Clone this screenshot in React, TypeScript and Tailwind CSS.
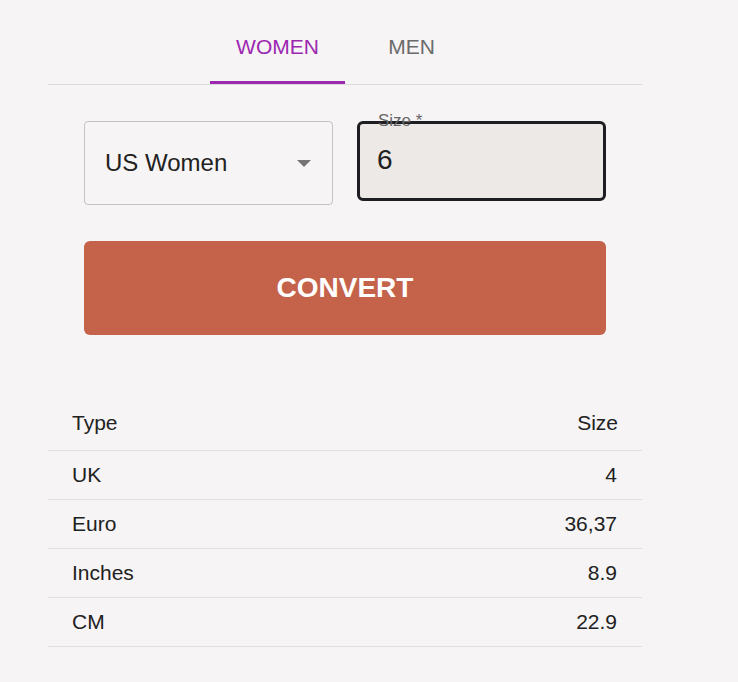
import { useState } from 'react'

const rows = [
  { type: 'UK', size: '4' },
  { type: 'Euro', size: '36,37' },
  { type: 'Inches', size: '8.9' },
  { type: 'CM', size: '22.9' },
]

export default function App() {
  const [tab, setTab] = useState('women')
  const [size, setSize] = useState('6')

  return (
    <div className="min-h-screen bg-[#f6f4f5] font-['Liberation_Sans',Arial,sans-serif] text-[#212121]">
      <div className="ml-[48px] w-[594px] pt-[10px]">
        {/* tabs */}
        <div className="flex justify-center border-b border-[#dcdadb] pr-[2px]">
          <button
            onClick={() => setTab('women')}
            className={`relative h-[74px] w-[135px] text-[21px] uppercase ${tab === 'women' ? 'text-[#9c27b0]' : 'text-[#6b6b6b]'}`}
          >
            Women
            {tab === 'women' && <span className="absolute bottom-0 left-0 h-[3px] w-full bg-[#9c27b0]" />}
          </button>
          <button
            onClick={() => setTab('men')}
            className={`relative h-[74px] w-[133px] text-[21px] uppercase ${tab === 'men' ? 'text-[#9c27b0]' : 'text-[#6b6b6b]'}`}
          >
            Men
            {tab === 'men' && <span className="absolute bottom-0 left-0 h-[3px] w-full bg-[#9c27b0]" />}
          </button>
        </div>

        {/* form */}
        <div className="px-[36px] pt-[36px]">
          <div className="flex items-start gap-[24px]">
            <div className="flex h-[84px] w-[249px] items-center justify-between rounded-[4px] border border-[#c4c2c3] pl-[20px] pr-[21px]">
              <span className="text-[24px]">US Women</span>
              <svg width="14" height="7" viewBox="0 0 14 7">
                <path d="M0 0h14L7 7z" fill="#757575" />
              </svg>
            </div>
            <div className="relative h-[80px] w-[249px] rounded-[6px] border-[3px] border-[#1e1e22] bg-[#ece9e6]">
              <span className="absolute left-[18px] top-[-13px] text-[17px] leading-[20px] text-[#666]">Size *</span>
              <input
                value={size}
                onChange={(e) => setSize(e.target.value)}
                className="h-full w-full bg-transparent pb-[2px] pl-[17px] text-[28px] outline-none"
              />
            </div>
          </div>

          <button className="mt-[36px] flex h-[94px] w-full items-center justify-center rounded-[6px] bg-[#c4624a] text-[28px] font-bold text-white">
            CONVERT
          </button>
        </div>

        {/* results */}
        <div className="mt-[62px] text-[21px]">
          <div className="flex h-[54px] items-center justify-between border-b border-[#e0dedf] px-[24px] pb-[2px]">
            <span>Type</span>
            <span>Size</span>
          </div>
          {rows.map((r) => (
            <div key={r.type} className="flex h-[49px] items-center justify-between border-b border-[#e0dedf] pl-[24px] pr-[25px]">
              <span>{r.type}</span>
              <span>{r.size}</span>
            </div>
          ))}
        </div>
      </div>
    </div>
  )
}
